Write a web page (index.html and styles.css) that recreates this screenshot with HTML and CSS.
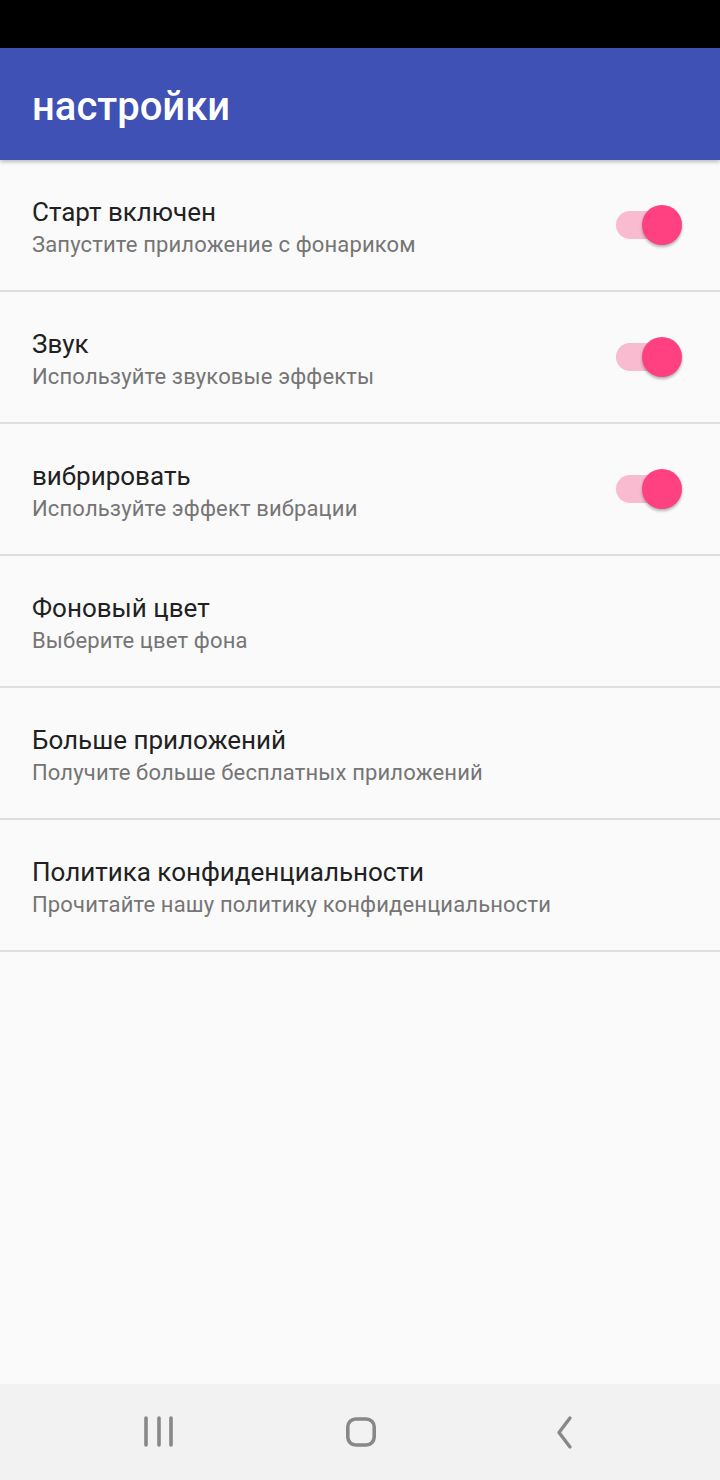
FILE: index.html
```html
<!DOCTYPE html>
<html lang="ru">
    <head>
        <meta charset="UTF-8">
        <meta name="viewport" content="width=device-width, initial-scale=1.0">
        <title>настройки</title>
        <link rel="stylesheet" href="styles.css">
    </head>
    <body>
        <div class="status-bar"></div>
        <header class="app-bar">
            <h1>настройки</h1>
        </header>

        <main class="prefs">
            <div class="pref">
                <div class="pref-text">
                    <div class="pref-title">Старт включен</div>
                    <div class="pref-summary">Запустите приложение с фонариком</div>
                </div>
                <div class="switch on"><span class="thumb"></span></div>
            </div>
            <div class="pref">
                <div class="pref-text">
                    <div class="pref-title">Звук</div>
                    <div class="pref-summary">Используйте звуковые эффекты</div>
                </div>
                <div class="switch on"><span class="thumb"></span></div>
            </div>
            <div class="pref">
                <div class="pref-text">
                    <div class="pref-title">вибрировать</div>
                    <div class="pref-summary">Используйте эффект вибрации</div>
                </div>
                <div class="switch on"><span class="thumb"></span></div>
            </div>
            <div class="pref">
                <div class="pref-text">
                    <div class="pref-title">Фоновый цвет</div>
                    <div class="pref-summary">Выберите цвет фона</div>
                </div>
            </div>
            <div class="pref">
                <div class="pref-text">
                    <div class="pref-title">Больше приложений</div>
                    <div class="pref-summary">Получите больше бесплатных приложений</div>
                </div>
            </div>
            <div class="pref">
                <div class="pref-text">
                    <div class="pref-title">Политика конфиденциальности</div>
                    <div class="pref-summary">Прочитайте нашу политику конфиденциальности</div>
                </div>
            </div>
        </main>

        <nav class="nav-bar">
            <svg class="nav-icon" width="40" height="40" viewBox="0 0 40 40">
                <path d="M7 6v27M20 6v27M32 6v27" stroke="#888" stroke-width="3.6" stroke-linecap="round" fill="none"/>
            </svg>
            <svg class="nav-icon" width="40" height="40" viewBox="0 0 40 40">
                <rect x="6.8" y="7" width="26.4" height="26" rx="8" stroke="#888" stroke-width="3.6" fill="none"/>
            </svg>
            <svg class="nav-icon" width="40" height="40" viewBox="0 0 40 40">
                <path d="M27 6L16 20.5L27 35" stroke="#888" stroke-width="3.4" stroke-linecap="round" stroke-linejoin="round" fill="none"/>
            </svg>
        </nav>
    </body>
</html>
```

FILE: styles.css
```css
body, html {
    height: 100%;
    margin: 0;
    font-family: Roboto, "Noto Sans", sans-serif;
    background-color: #fafafa;
}
body {
    display: flex;
    flex-direction: column;
}
.status-bar {
    height: 48px;
    background-color: #000;
}
.app-bar {
    height: 112px;
    background-color: #3f51b5;
    display: flex;
    align-items: center;
    padding: 4px 32px 0;
    box-sizing: border-box;
    box-shadow: 0 2px 4px rgba(0, 0, 0, 0.25);
    position: relative;
    z-index: 1;
}
.app-bar h1 {
    margin: 0;
    color: #fff;
    font-size: 40px;
    font-weight: 500;
}
.prefs {
    flex: 1;
}
.pref {
    display: flex;
    align-items: center;
    height: 130px;
    padding: 0 38px 0 32px;
    border-bottom: 2px solid #dedede;
}
.pref-text {
    flex: 1;
    padding-top: 4px;
}
.pref-title {
    font-size: 26px;
    line-height: 34px;
    color: #212121;
}
.pref-summary {
    font-size: 22px;
    line-height: 28px;
    margin-top: 2px;
    letter-spacing: 0.15px;
    color: #757575;
}
.switch {
    position: relative;
    width: 66px;
    height: 28px;
    border-radius: 14px;
    background-color: #f8bbd0;
}
.switch .thumb {
    position: absolute;
    top: -6px;
    right: 0;
    width: 40px;
    height: 40px;
    border-radius: 50%;
    background-color: #ff4081;
    box-shadow: 0 2px 3px rgba(0, 0, 0, 0.3);
}
.nav-bar {
    height: 96px;
    background-color: #f2f2f2;
    display: flex;
    justify-content: center;
    align-items: center;
    gap: 162px;
    padding-left: 2px;
}
```
